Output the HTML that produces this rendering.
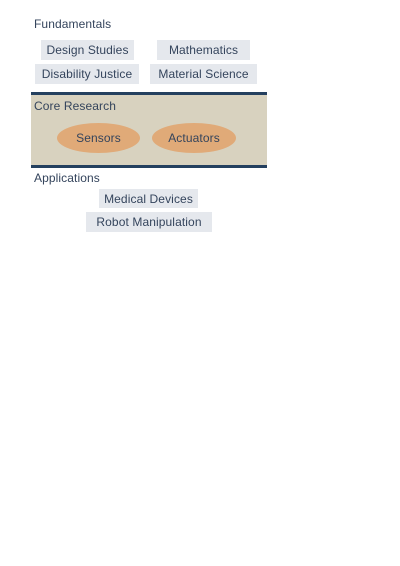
<!DOCTYPE html>
<html><head><style>
body{margin:0;width:400px;height:566px;background:#fff;font-family:"Liberation Sans",sans-serif;color:#34445c;position:relative;overflow:hidden}
.a{position:absolute;font-size:12px;white-space:nowrap;letter-spacing:0.1px}
.b{position:absolute;background:#e5e8ed;font-size:12px;display:flex;align-items:center;justify-content:center;color:#34445c;letter-spacing:0.1px}
.e{position:absolute;background:#e0aa78;border-radius:50%;font-size:12px;display:flex;align-items:center;justify-content:center;letter-spacing:0.1px}
</style></head><body>
<div class="a" style="left:34px;top:17px">Fundamentals</div>
<div class="b" style="left:41px;top:40px;width:93px;height:20px">Design Studies</div>
<div class="b" style="left:157px;top:40px;width:93px;height:20px">Mathematics</div>
<div class="b" style="left:35px;top:64px;width:104px;height:20px">Disability Justice</div>
<div class="b" style="left:150px;top:64px;width:107px;height:20px">Material Science</div>
<div style="position:absolute;left:31px;top:92px;width:236px;height:76px;background:#d8d2bf;border-top:3px solid #24405f;border-bottom:3px solid #24405f;box-sizing:border-box"></div>
<div class="a" style="left:34px;top:99px">Core Research</div>
<div class="e" style="left:57px;top:123px;width:83px;height:30px">Sensors</div>
<div class="e" style="left:152px;top:123px;width:84px;height:30px">Actuators</div>
<div class="a" style="left:34px;top:171px">Applications</div>
<div class="b" style="left:99px;top:189px;width:99px;height:19px">Medical Devices</div>
<div class="b" style="left:86px;top:212px;width:126px;height:20px">Robot Manipulation</div>
</body></html>
